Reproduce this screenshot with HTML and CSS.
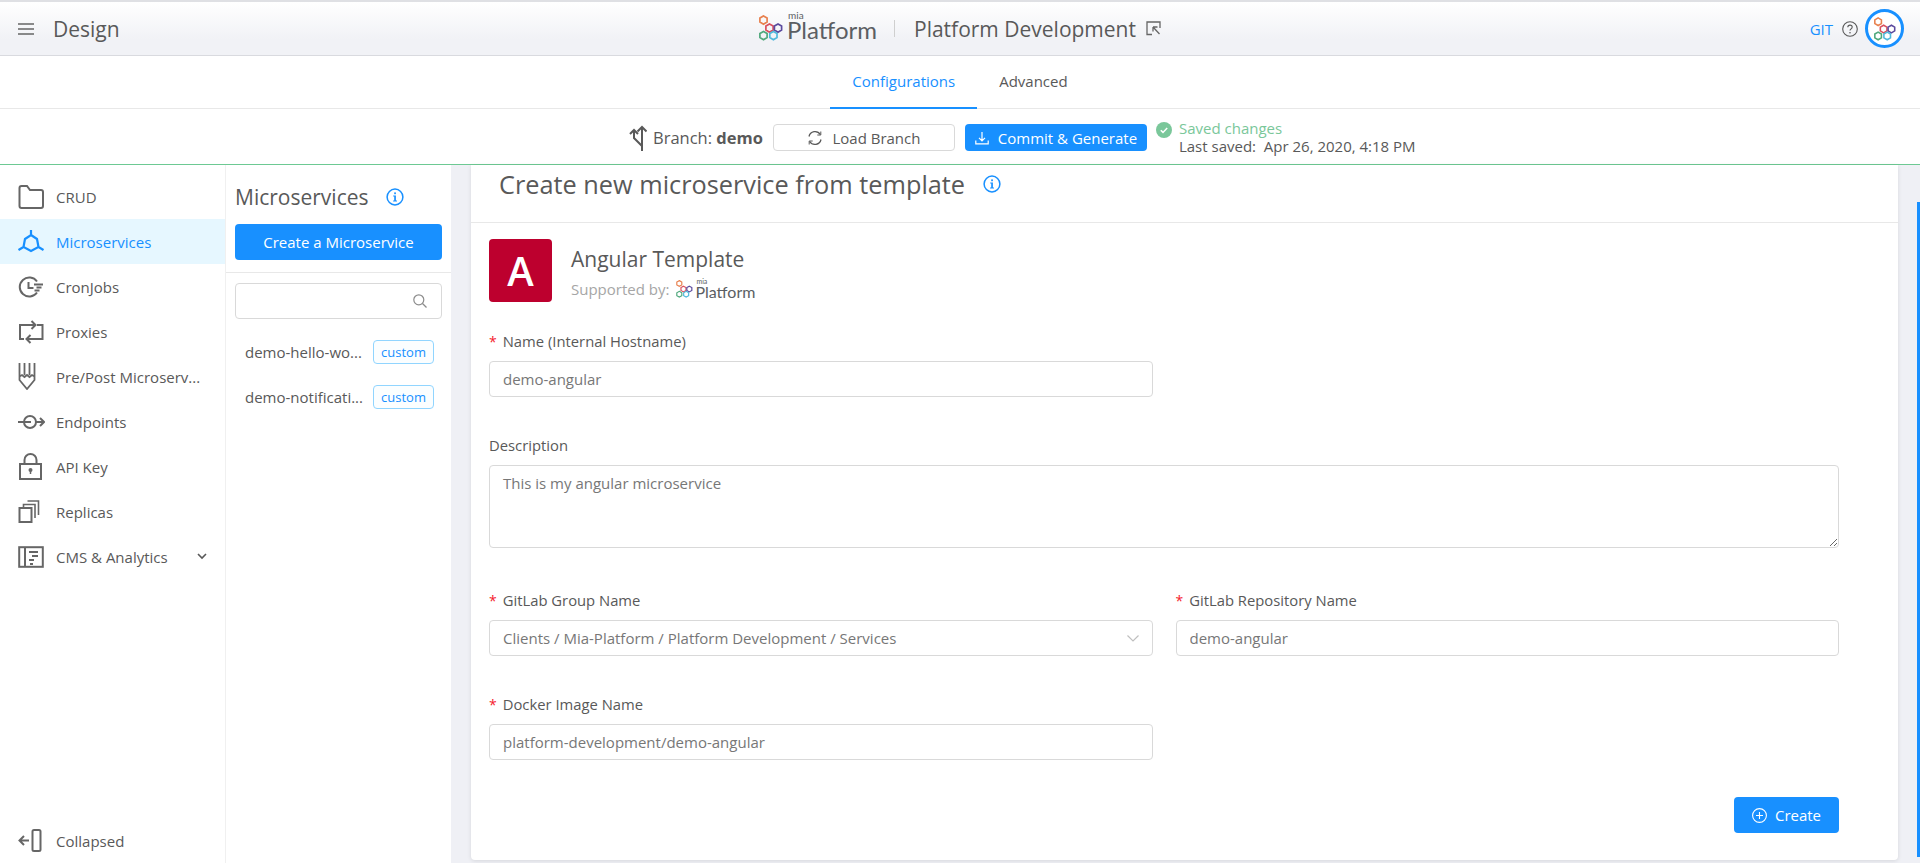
FILE: index.html
```html
<!DOCTYPE html>
<html lang="en">
<head>
    <meta charset="UTF-8">
    <title>Design - Mia Platform</title>
    <link rel="stylesheet" href="styles.css">
</head>
<body>
    <svg class="defs" width="0" height="0">
        <symbol id="hexes" viewBox="0 0 24 26">
            <g fill="none" stroke-width="1.7">
                <path stroke="#e8814f" d="M4.5 .9l3.6 2.1v4.1l-3.6 2.1-3.6-2.1V3z"/>
                <path stroke="#d9505f" d="M10.5 8.9l3.6 2.1v4.1l-3.6 2.1-3.6-2.1V11z"/>
                <path stroke="#5b4a9e" d="M19 8.9l3.6 2.1v4.1L19 17.2l-3.6-2.1V11z"/>
                <path stroke="#4fa87c" d="M4.5 16.4L8.1 18.5v4.1l-3.6 2.1-3.6-2.1v-4.1z"/>
                <path stroke="#4fb8dc" d="M14.4 16.4l3.6 2.1v4.1l-3.6 2.1-3.6-2.1v-4.1z"/>
            </g>
        </symbol>
        <symbol id="info" viewBox="0 0 18 18">
            <circle cx="9" cy="9" r="7.9" fill="none" stroke="#1890ff" stroke-width="1.5"/>
            <rect x="8.2" y="4.4" width="1.7" height="1.8" fill="#1890ff"/>
            <path d="M7.2 7.6h2.7v5h1.1v1H7.1v-1h1.1V8.6h-1z" fill="#1890ff"/>
        </symbol>
    </svg>

    <header class="topbar">
        <div class="topbar-left">
            <svg class="menu-icon" width="16" height="12" viewBox="0 0 16 12"><path d="M0 1h16M0 6h16M0 11h16" stroke="#666" stroke-width="1.5"/></svg>
            <span class="section-name">Design</span>
        </div>
        <div class="brand">
            <svg class="brand-hexes" width="24" height="26"><use href="#hexes"/></svg>
            <div class="wordmark">
                <span class="wordmark-mia">mia</span>
                <span class="wordmark-name">Platform</span>
            </div>
            <span class="brand-sep"></span>
            <span class="project-name">Platform Development</span>
            <svg class="open-icon" width="15" height="15" viewBox="0 0 15 15" fill="none" stroke="#666" stroke-width="1.3"><path d="M6 13.5H1V1h13v6"/><path d="M7 6l6.5 7M7 6v4.5M7 6h4.5"/></svg>
        </div>
        <div class="topbar-right">
            <span class="git-link">GIT</span>
            <svg width="16" height="16" viewBox="0 0 16 16"><circle cx="8" cy="8" r="7.3" fill="none" stroke="#595959" stroke-width="1.1"/><path d="M5.8 6.2c0-1.3 1-2.1 2.2-2.1s2.2.8 2.2 2c0 1.800-2.200 1.700-2.200 3.500" fill="none" stroke="#595959" stroke-width="1.1"/><circle cx="8" cy="11.700" r=".8" fill="#595959"/></svg>
            <div class="avatar"><svg width="22" height="24"><use href="#hexes"/></svg></div>
        </div>
    </header>

    <nav class="tabs">
        <a class="tab tab-active">Configurations</a>
        <a class="tab">Advanced</a>
    </nav>

    <div class="branchbar">
        <svg class="branch-icon" width="18" height="26" viewBox="0 0 18 26" fill="none" stroke="#595959" stroke-width="2"><path d="M13 26V2M8.500 6.500L13 2l4.500 4.500M13 21L5 13V5.500M1 9l4-4 4 4"/></svg>
        <span class="branch-label">Branch: <b>demo</b></span>
        <button class="btn btn-default">
            <svg width="16" height="16" viewBox="0 0 16 16" fill="none" stroke="#595959" stroke-width="1.300"><path d="M2 6.500A6.200 6.200 0 0 1 13.300 4.500M14 9.500A6.200 6.200 0 0 1 2.700 11.500"/><path d="M13.800 1.500v3.500h-3.500M2.200 14.500V11h3.500" stroke-width="1"/></svg>
            Load Branch
        </button>
        <button class="btn btn-primary btn-commit">
            <svg width="14" height="14" viewBox="0 0 14 14" fill="none" stroke="#fff" stroke-width="1.200"><path d="M7 1v8.500M4 6.800l3 3 3-3M.8 9.500v3.300h12.400V9.500"/></svg>
            Commit &amp; Generate
        </button>
        <svg class="saved-icon" width="16" height="16" viewBox="0 0 16 16"><circle cx="8" cy="8" r="8" fill="#7ac79a"/><path d="M4.800 8.200l2.200 2.200 4.200-4.400" fill="none" stroke="#fff" stroke-width="1.500"/></svg>
        <div class="saved-text">
            <div class="saved-ok">Saved changes</div>
            <div class="saved-date">Last saved:&nbsp; Apr 26, 2020, 4:18 PM</div>
        </div>
    </div>

    <div class="workspace">
        <aside class="sidebar">
            <a class="side-item">
                <span class="side-icon"><svg width="26" height="24" viewBox="0 0 26 24" fill="none" stroke="#666" stroke-width="2"><path d="M1.500 3q0-2 2-2H9l3 4h11q2 0 2 2v14q0 2-2 2H3.500q-2 0-2-2z"/></svg></span>
                CRUD
            </a>
            <a class="side-item side-item-active">
                <span class="side-icon"><svg width="26" height="24" viewBox="0 0 26 24" fill="none" stroke="#1890ff" stroke-width="2.200"><path d="M13 5l6 4 1.500 8-7.500 4-7.500-4L7 9zM13 0v5M20.500 17l5 3M5.500 17l-5 3"/></svg></span>
                Microservices
            </a>
            <a class="side-item">
                <span class="side-icon"><svg width="26" height="22" viewBox="0 0 26 22" fill="none" stroke="#666" stroke-width="2"><path d="M19 5.500A9.500 9.500 0 1 0 19 16.500M10.500 6v6h5M16 8.500h9M18.500 11.500h5M16.500 14.500h5" /></svg></span>
                CronJobs
            </a>
            <a class="side-item">
                <span class="side-icon"><svg width="26" height="24" viewBox="0 0 26 24" fill="none" stroke="#666" stroke-width="2"><path d="M6 19H2V5h15M13.500 1l4 4-4 4M19 5h5.500v14H9M12.500 15l-4 4 4 4"/></svg></span>
                Proxies
            </a>
            <a class="side-item">
                <span class="side-icon"><svg width="18" height="27" viewBox="0 0 18 27" fill="none" stroke="#666" stroke-width="1.800"><path d="M1.500 0v17L9 26l7.500-9V0M6.500 0v12M11.500 0v12M1.500 13.500L4 12l2.500 2L9 12l2.500 2 2.500-2 2.500 1.500"/></svg></span>
                Pre/Post Microserv...
            </a>
            <a class="side-item">
                <span class="side-icon"><svg width="27" height="16" viewBox="0 0 27 16" fill="none" stroke="#666" stroke-width="2"><circle cx="12" cy="8" r="6"/><path d="M0 8h13M18 8h7M22 4l4 4-4 4"/></svg></span>
                Endpoints
            </a>
            <a class="side-item">
                <span class="side-icon"><svg width="24" height="27" viewBox="0 0 24 27" fill="none" stroke="#666" stroke-width="2"><rect x="2" y="11" width="21" height="15"/><path d="M6.500 11V7a6 6 0 0 1 12 0v4"/><circle cx="12.500" cy="17" r="2" fill="#666" stroke="none"/><path d="M12.500 17v4" stroke-width="1.500"/></svg></span>
                API Key
            </a>
            <a class="side-item">
                <span class="side-icon"><svg width="22" height="23" viewBox="0 0 22 23" fill="none" stroke="#666" stroke-width="2"><rect x="1.500" y="8" width="12" height="14"/><path d="M5.500 7V4.500h11.500V18M9.500 1h11v14" stroke-width="1.600"/></svg></span>
                Replicas
            </a>
            <a class="side-item">
                <span class="side-icon"><svg width="26" height="22" viewBox="0 0 26 22" fill="none" stroke="#666" stroke-width="2"><rect x="1.200" y="1.200" width="23.600" height="19.600"/><path d="M7 1v20M11 6h9M14 10h6M11 14h5M12 18h3"/></svg></span>
                CMS &amp; Analytics
                <svg class="side-caret" width="10" height="7" viewBox="0 0 10 7"><path d="M1 1l4 4 4-4" fill="none" stroke="#595959" stroke-width="1.600"/></svg>
            </a>
            <a class="side-item side-collapse">
                <span class="side-icon"><svg width="24" height="23" viewBox="0 0 24 23" fill="none" stroke="#666" stroke-width="2"><rect x="14.500" y="1" width="8" height="21" rx="1.500"/><path d="M11 11.500H1.500M6 7l-4.500 4.500L6 16"/></svg></span>
                Collapsed
            </a>
        </aside>

        <section class="services">
            <div class="services-head">
                <div class="services-title">
                    <h2>Microservices</h2>
                    <svg width="18" height="18"><use href="#info"/></svg>
                </div>
                <button class="btn btn-primary btn-block">Create a Microservice</button>
            </div>
            <div class="search">
                <svg width="14" height="14" viewBox="0 0 14 14" fill="none" stroke="#8c8c8c" stroke-width="1.200"><circle cx="5.800" cy="5.800" r="5"/><path d="M9.500 9.500l4 4"/></svg>
            </div>
            <ul class="service-list">
                <li><span>demo-hello-wo...</span><span class="tag">custom</span></li>
                <li><span>demo-notificati...</span><span class="tag">custom</span></li>
            </ul>
        </section>

        <main class="content">
            <div class="card">
                <div class="card-head">
                    <h1>Create new microservice from template</h1>
                    <svg width="18" height="18"><use href="#info"/></svg>
                </div>
                <form class="card-body">
                    <div class="template">
                        <div class="template-logo">A</div>
                        <div class="template-info">
                            <div class="template-name">Angular Template</div>
                            <div class="template-support">
                                Supported by:
                                <svg width="17" height="18"><use href="#hexes"/></svg>
                                <div class="wordmark wordmark-small">
                                    <span class="wordmark-mia">mia</span>
                                    <span class="wordmark-name">Platform</span>
                                </div>
                            </div>
                        </div>
                    </div>

                    <div class="field field-half">
                        <label class="required">Name (Internal Hostname)</label>
                        <input type="text" value="demo-angular">
                    </div>
                    <div class="field field-desc">
                        <label>Description</label>
                        <textarea>This is my angular microservice</textarea>
                    </div>
                    <div class="field-row">
                        <div class="field">
                            <label class="required">GitLab Group Name</label>
                            <div class="select">
                                Clients / Mia-Platform / Platform Development / Services
                                <svg width="12" height="7" viewBox="0 0 12 7"><path d="M.5.500L6 6 11.500.500" fill="none" stroke="#bfbfbf" stroke-width="1.200"/></svg>
                            </div>
                        </div>
                        <div class="field">
                            <label class="required">GitLab Repository Name</label>
                            <input type="text" value="demo-angular">
                        </div>
                    </div>
                    <div class="field field-half">
                        <label class="required">Docker Image Name</label>
                        <input type="text" value="platform-development/demo-angular">
                    </div>
                    <div class="form-actions">
                        <button type="button" class="btn btn-primary btn-create">
                            <svg width="15" height="15" viewBox="0 0 15 15" fill="none" stroke="#fff" stroke-width="1.100"><circle cx="7.500" cy="7.500" r="6.900"/><path d="M7.500 4v7M4 7.500h7"/></svg>
                            Create
                        </button>
                    </div>
                </form>
            </div>
            <div class="scroll-thumb"></div>
        </main>
    </div>
</body>
</html>
```

FILE: styles.css
```css
* {
    box-sizing: border-box;
}
html, body {
    height: 100%;
}
body {
    margin: 0;
    height: 863px;
    overflow: hidden;
    display: flex;
    flex-direction: column;
    background-color: #ffffff;
    color: #595959;
    font-family: "Open Sans", sans-serif;
    font-size: 15px;
}
.defs {
    position: absolute;
}

/* top bar */
.topbar {
    height: 56px;
    flex: none;
    display: grid;
    grid-template-columns: 1fr auto 1fr;
    align-items: center;
    border-top: 2px solid #dfe0e4;
    border-bottom: 1px solid #d9dadf;
    background: linear-gradient(#ffffff, #f1f2f6 70%);
}
.topbar-left {
    display: flex;
    align-items: center;
    padding-left: 18px;
}
.section-name {
    margin-left: 19px;
    font-size: 21px;
}
.brand {
    display: flex;
    align-items: center;
}
.brand-hexes {
    margin-top: -2px;
}
.wordmark {
    position: relative;
    margin: 0 0 6px 4px;
    padding-top: 8px;
    color: #5b5e63;
    font-family: Lato, sans-serif;
}
.wordmark-mia {
    position: absolute;
    top: 0;
    left: 1px;
    font-size: 10px;
    line-height: 10px;
}
.wordmark-name {
    display: block;
    font-size: 24px;
    line-height: 24px;
}
.brand-sep {
    width: 1px;
    height: 17px;
    margin: 0 19px 0 17px;
    background-color: #cfcfcf;
}
.project-name {
    font-size: 21px;
}
.open-icon {
    margin-left: 10px;
}
.topbar-right {
    display: flex;
    align-items: center;
    justify-content: flex-end;
    padding-right: 16px;
}
.git-link {
    margin-right: 9px;
    color: #1890ff;
}
.avatar {
    width: 39px;
    height: 39px;
    margin-left: 7px;
    display: flex;
    align-items: center;
    justify-content: center;
    border: 3px solid #1890ff;
    border-radius: 50%;
    background-color: #ffffff;
}

/* tabs */
.tabs {
    height: 53px;
    flex: none;
    display: flex;
    justify-content: center;
    border-bottom: 1px solid #e8e8e8;
}
.tab {
    height: 53px;
    padding: 14px 22px 0;
    line-height: 22px;
}
.tab-active {
    color: #1890ff;
    border-bottom: 2px solid #1890ff;
}

/* branch bar */
.branchbar {
    height: 56px;
    flex: none;
    display: flex;
    align-items: center;
    padding-top: 2px;
    padding-left: 629px;
    border-bottom: 1px solid #6dc993;
}
.branch-label {
    margin-left: 6px;
    font-size: 16.5px;
}
.btn {
    height: 36px;
    display: inline-flex;
    align-items: center;
    justify-content: center;
    gap: 8px;
    border: 1px solid transparent;
    border-radius: 4px;
    font-family: inherit;
    font-size: 15px;
    cursor: pointer;
}
.btn-default {
    width: 182px;
    height: 27px;
    margin-left: 10px;
    gap: 9px;
    background-color: #ffffff;
    border-color: #d9d9d9;
    color: #595959;
}
.btn-primary {
    background-color: #1890ff;
    color: #ffffff;
}
.btn-commit {
    width: 182px;
    height: 27px;
    margin-left: 10px;
    gap: 9px;
}
.saved-icon {
    margin: -16px 7px 0 9px;
}
.saved-text {
    margin-bottom: 2px;
    line-height: 18px;
}
.saved-ok {
    color: #7ac79a;
}

/* left menu */
.workspace {
    flex: 1;
    min-height: 0;
    display: flex;
}
.sidebar {
    width: 226px;
    flex: none;
    display: flex;
    flex-direction: column;
    padding-top: 9px;
    border-right: 1px solid #f0f0f0;
}
.side-item {
    height: 45px;
    flex: none;
    display: flex;
    align-items: center;
    padding-right: 18px;
    white-space: nowrap;
}
.side-item-active {
    background-color: #e6f7ff;
    color: #1890ff;
}
.side-icon {
    width: 56px;
    padding-left: 18px;
    display: flex;
    align-items: center;
}
.side-caret {
    margin-left: auto;
}
.side-collapse {
    margin-top: auto;
}

/* microservices column */
.services {
    width: 225px;
    flex: none;
}
.services-head {
    padding: 17px 9px 12px;
    border-bottom: 1px solid #e8e8e8;
}
.services-title {
    height: 30px;
    margin-bottom: 12px;
    display: flex;
    align-items: center;
    gap: 17px;
}
.services-title h2 {
    margin: 0;
    font-size: 21px;
    font-weight: 400;
}
.btn-block {
    width: 100%;
}
.search {
    height: 36px;
    margin: 10px 9px 0;
    padding-right: 14px;
    display: flex;
    align-items: center;
    justify-content: flex-end;
    border: 1px solid #d9d9d9;
    border-radius: 4px;
}
.service-list {
    margin: 10px 0 0;
    padding: 0 17px 0 19px;
    list-style: none;
}
.service-list li {
    height: 45px;
    display: flex;
    align-items: center;
    justify-content: space-between;
    white-space: nowrap;
}
.tag {
    width: 61px;
    height: 24px;
    line-height: 22px;
    text-align: center;
    font-size: 13px;
    color: #1890ff;
    border: 1px solid #91d5ff;
    border-radius: 4px;
    background-color: #fbfeff;
}

/* main card */
.content {
    position: relative;
    flex: 1;
    min-width: 0;
    padding: 0 22px 3px 20px;
    background-color: #eff0f5;
}
.card {
    height: 100%;
    background-color: #ffffff;
    border-radius: 0 0 4px 4px;
    box-shadow: 0 1px 4px rgba(0,0,0,0.1);
}
.card-head {
    height: 58px;
    padding: 0 28px 19px;
    display: flex;
    align-items: center;
    gap: 18px;
    border-bottom: 1px solid #e8e8e8;
}
.card-head h1 {
    margin: 0;
    font-size: 25.3px;
    font-weight: 400;
}
.card-body {
    padding: 16px 59px 0 18px;
}
.template {
    display: flex;
    align-items: center;
    margin-bottom: 29px;
}
.template-logo {
    width: 63px;
    height: 63px;
    display: flex;
    align-items: center;
    justify-content: center;
    border-radius: 4px;
    background-color: #bd002e;
    color: #ffffff;
    font-size: 40px;
    font-weight: 600;
}
.template-info {
    margin-left: 19px;
    padding-top: 5px;
}
.template-name {
    font-size: 21px;
    line-height: 27px;
}
.template-support {
    margin-top: 5px;
    display: flex;
    align-items: center;
    color: #a6a6a6;
    line-height: 20px;
}
.template-support svg {
    margin-left: 7px;
}
.wordmark-small {
    margin: 0 0 0 2px;
    padding-top: 6px;
}
.wordmark-small .wordmark-mia {
    top: 0;
    font-size: 7px;
    line-height: 7px;
}
.wordmark-small .wordmark-name {
    font-size: 16px;
    line-height: 16px;
}
.field {
    margin-bottom: 38px;
}
.field label {
    display: block;
    height: 22px;
    margin-bottom: 8px;
    font-size: 14.8px;
    line-height: 20px;
}
.required::before {
    content: "*";
    margin-right: 6px;
    color: #f5222d;
    font-size: 14px;
}
.field-half {
    width: 664px;
}
.field-desc {
    margin-bottom: 42px;
}
.field-row {
    display: grid;
    grid-template-columns: 1fr 1fr;
    gap: 23px;
}
.field input, .field textarea, .select {
    width: 100%;
    height: 36px;
    padding: 0 13px;
    display: block;
    border: 1px solid #d9d9d9;
    border-radius: 4px;
    background-color: #ffffff;
    color: #777777;
    font-family: inherit;
    font-size: 15px;
}
.field textarea {
    height: 83px;
    padding-top: 6px;
    line-height: 22px;
}
.select {
    display: flex;
    align-items: center;
    justify-content: space-between;
}
.form-actions {
    margin-top: -1px;
    display: flex;
    justify-content: flex-end;
}
.btn-create {
    width: 105px;
}
.scroll-thumb {
    position: absolute;
    top: 37px;
    bottom: 6px;
    right: 0;
    width: 3px;
    background-color: #1890ff;
}
```
